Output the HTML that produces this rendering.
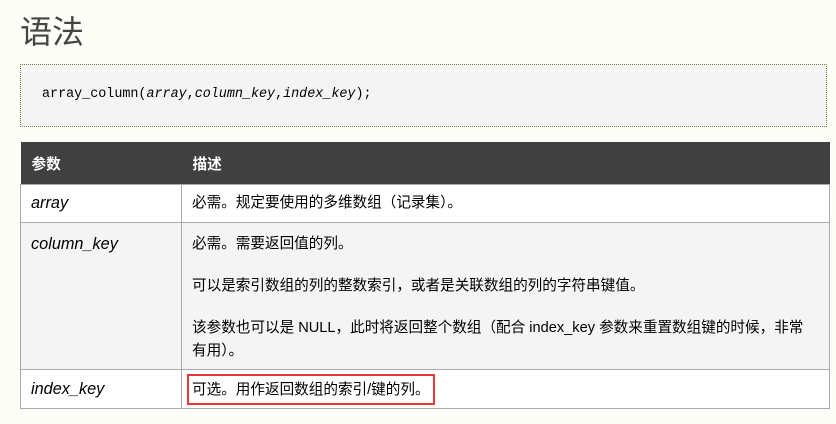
<!DOCTYPE html>
<html><head><meta charset="utf-8"><style>
body{margin:0;background:#fdfdf8;width:836px;height:424px;overflow:hidden;font-family:"Liberation Sans","Noto Sans CJK SC",sans-serif;color:#000}
h2{position:absolute;left:20px;top:10px;margin:0;font-size:32px;font-weight:normal;color:#444;line-height:44px;font-family:"Liberation Sans","Noto Sans CJK SC",sans-serif}
.code{position:absolute;left:20px;top:64px;width:805px;height:61px;border:1px dotted #6a8a3a;background:#f4f4f4}
.code span{position:absolute;left:21px;top:22px;font-family:"Liberation Mono","DejaVu Sans Mono",monospace;font-size:13.4px;color:#000}
table{position:absolute;left:20px;top:142px;width:810px;border-collapse:collapse;font-size:14.6px}
th{background:#404040;color:#fff;text-align:left;height:42px;padding:0 0 0 11px;font-weight:bold;font-size:14.6px}
td{border:1px solid #aaa;padding:0 0 0 10px;vertical-align:top}
td.k{font-style:italic;width:150px;font-size:16.3px}
tr.g td{background:#f4f4f4}
tr.w td{background:#fff}
p{margin:0}
</style></head><body>
<h2>语法</h2>
<div class="code"><span>array_column(<i>array</i>,<i>column_key</i>,<i>index_key</i>);</span></div>
<table>
<tr><th style="width:150px">参数</th><th>描述</th></tr>
<tr class="w"><td class="k" style="height:37px;line-height:37px">array</td><td style="line-height:37px">必需。规定要使用的多维数组（记录集）。</td></tr>
<tr class="g"><td class="k" style="padding-top:10px;line-height:23px">column_key</td><td style="padding-top:10px;padding-bottom:6px;line-height:23px">
<p>必需。需要返回值的列。</p>
<p style="margin-top:19px">可以是索引数组的列的整数索引，或者是关联数组的列的字符串键值。</p>
<p style="margin-top:19px;padding-right:24px">该参数也可以是 NULL，此时将返回整个数组（配合 index_key 参数来重置数组键的时候，非常有用）。</p></td></tr>
<tr class="w"><td class="k" style="height:38px;line-height:38px">index_key</td><td style="padding-left:5px;padding-top:4px;height:34px"><span style="display:inline-block;border:2px solid #e8353a;padding:2px 3px 0;line-height:25px;height:25px">可选。用作返回数组的索引/键的列。</span></td></tr>
</table>
</body></html>
